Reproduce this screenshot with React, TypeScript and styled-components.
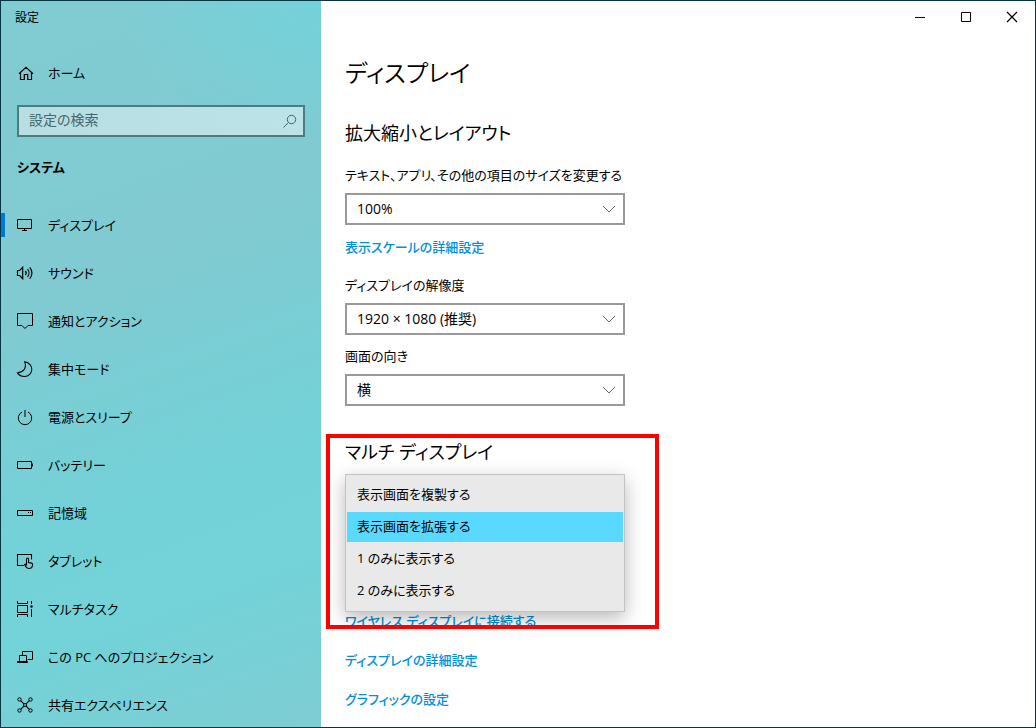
import React, { useState } from "react";
import styled, { createGlobalStyle } from "styled-components";

const GlobalStyle = createGlobalStyle`
  *, *::before, *::after { box-sizing: border-box; }
  body {
    margin: 0;
    font-family: "Open Sans", "Noto Sans CJK JP", sans-serif;
    font-feature-settings: "palt";
    font-size: 13px;
    line-height: 20px;
    color: #000;
  }
  button, input, select {
    font: inherit;
    font-feature-settings: inherit;
    color: inherit;
  }
  h1, h2, p, ul { margin: 0; padding: 0; }
`;

const Window = styled.div`
  display: grid;
  grid-template-columns: 320px minmax(0, 1fr);
  height: 100vh;
  border: 1px solid #06363f;
  background: #fff;
  overflow: hidden;
`;

const Sidebar = styled.aside`
  display: flex;
  flex-direction: column;
  min-height: 0;
  overflow-y: auto;
  scrollbar-width: none;
  background:
    radial-gradient(ellipse 200px 140px at 100% 0%, #73d2da 0%, rgba(115, 210, 218, 0) 100%),
    linear-gradient(160deg, #80ccd3 0%, #81cad1 36%, #72d2d8 66%, #72d3d8 78%, #7ecdd3 100%);
`;

const WindowTitle = styled.p`
  padding: 7px 14px 5px;
  font-size: 12px;
`;

const NavLink = styled.a<{ $active?: boolean }>`
  display: flex;
  flex: none;
  align-items: center;
  gap: 14px;
  height: 48px;
  padding-left: 15px;
  color: inherit;
  text-decoration: none;
  background: linear-gradient(#0078d7, #0078d7) left center / ${(p) => (p.$active ? "4px 24px" : "0 0")} no-repeat;
`;

const HomeArea = styled.div`
  padding-top: 16px;
`;

const SearchBox = styled.form`
  display: flex;
  flex: none;
  align-items: center;
  height: 32px;
  margin: 8px 16px 0;
  padding: 0 5px 0 10px;
  border: 2px solid #4c7b80;
  background: linear-gradient(100deg, #b7dee2, #bce4e8);
  color: #4b666b;
`;

const SearchInput = styled.input`
  flex: 1;
  min-width: 0;
  padding: 0 0 2px;
  border: 0;
  outline: 0;
  background: transparent;
  font-size: 14px;
  &::placeholder { color: #47666b; opacity: 1; }
`;

const SearchButton = styled.button`
  display: flex;
  padding: 0;
  border: 0;
  background: transparent;
`;

const GroupTitle = styled.h2`
  padding: 20px 16px 24px;
  font-size: 13px;
  line-height: 20px;
  font-weight: 600;
`;

const NavList = styled.ul`
  list-style: none;
`;

const Main = styled.main`
  display: flex;
  flex-direction: column;
  min-width: 0;
  overflow: hidden;
`;

const CaptionBar = styled.div`
  display: flex;
  flex: none;
  justify-content: flex-end;
`;

const CaptionButton = styled.button`
  display: grid;
  place-items: center;
  width: 46px;
  height: 32px;
  padding: 0;
  border: 0;
  background: transparent;
`;

const Content = styled.div`
  display: flex;
  flex-direction: column;
  align-items: flex-start;
  padding: 20px 24px 0;
`;

const PageTitle = styled.h1`
  font-size: 24px;
  line-height: 40px;
  font-weight: 350;
`;

const Section = styled.section`
  display: flex;
  flex-direction: column;
  align-items: flex-start;
  width: 100%;
  margin-top: 24px;
`;

const SectionTitle = styled.h2`
  font-size: 18px;
  line-height: 32px;
  font-weight: 400;
`;

const Field = styled.div<{ $gap: number }>`
  display: grid;
  gap: 8px;
  width: 280px;
  max-width: 100%;
  margin-top: ${(p) => p.$gap}px;
`;

const SelectFrame = styled.div`
  display: grid;
  align-items: center;
  & > * { grid-area: 1 / 1; }
  & > svg { justify-self: end; margin-right: 9px; pointer-events: none; }
`;

const Select = styled.select`
  width: 100%;
  height: 32px;
  padding: 0 32px 0 10px;
  border: 2px solid #999;
  border-radius: 0;
  background: #fff;
  font-size: 14px;
  appearance: none;
`;

const TextLink = styled.a<{ $gap: number }>`
  margin-top: ${(p) => p.$gap}px;
  color: #008fdf;
  font-weight: 500;
  text-decoration: none;
`;

const MultiSection = styled(Section)`
  position: relative;
  margin-top: 30px;
`;

const Popup = styled.div`
  position: absolute;
  top: 38px;
  left: 0;
  z-index: 1;
  width: 280px;
  padding: 4px 1px;
  border: 1px solid #c3c3c3;
  background: #e9e9e9;
  box-shadow: 0 6px 18px rgba(0, 0, 0, 0.28);
`;

const Option = styled.button<{ $selected: boolean }>`
  display: block;
  width: 100%;
  height: 32px;
  padding: 0 10px 2px;
  border: solid transparent;
  border-width: 1px 0;
  text-align: left;
  background: ${(p) => (p.$selected ? "#5ad9ff" : "transparent")};
  background-clip: padding-box;
`;

const Highlight = styled.div`
  position: absolute;
  top: -2px;
  left: -19px;
  z-index: 2;
  width: 333px;
  height: 195px;
  border: 4px solid #ff0000;
  pointer-events: none;
`;

const MultiLinks = styled.div`
  display: flex;
  flex-direction: column;
  align-items: flex-start;
  padding-top: 124px;
`;

const Glyph = ({ children, size = 18, weight = 1 }: { children: React.ReactNode; size?: number; weight?: number }) => (
  <svg width={size} height={size} viewBox={`0 0 ${size} ${size}`} fill="none" stroke="currentColor" strokeWidth={weight} aria-hidden="true">
    {children}
  </svg>
);

const homeIcon = <path d="M3 9.7 10 3.3l7 6.4M4.5 8.5v7h3.800v-5h3.400v5h3.800v-7" strokeWidth="1.2" />;

const navItems = [
  { label: "ディスプレイ", icon: <path d="M1.5 3.5h14v9h-14zM8.5 12.5v2M6 14.5h5" /> },
  {
    label: "サウンド",
    icon: (
      <path
        d="M1.5 6.5h2.200l3-3.200v11.400l-3-3.200H1.500zM9.300 7c1.100 1.200 1.100 2.900 0 4.100M11.500 5.200c2 2.200 2 5.500 0 7.700M13.700 3.400c3 3.300 3 8 0 11.300"
        strokeWidth="1.200"
      />
    ),
  },
  { label: "通知とアクション", icon: <path d="M1.5 1.5h15v12h-4.500l-3 3-3-3H1.500z" /> },
  {
    label: "集中モード",
    icon: <path d="M8.700 1.900c4.200.4 7.100 3.700 7.100 7.300 0 4.100-3.200 7.300-7.200 7.300-3 0-5.600-1.300-7.100-3.600 5.800-.4 9.600-4.900 7.200-11z" strokeWidth="1.100" />,
  },
  { label: "電源とスリープ", icon: <path d="M6 4a6.700 6.700 0 1 0 6 0M9 2v7" /> },
  { label: "バッテリー", icon: <path d="M1.5 5.5h14v7h-14zM16.500 7.500v3" /> },
  { label: "記憶域", icon: <path d="M2 6.500h14.500v5H1.500v-5zM12 8.500h1M14 8.500h1" /> },
  {
    label: "タブレット",
    icon: <path d="M8 13.500H1.500v-11h14v5M10.500 13.500V7a1 1 0 0 1 2 0v3.500l3 .6c.8.2 1.200.6 1.100 1.400-.1 2.400-1 4-3.600 4-2.200 0-3-1-4.500-4 .6-.8 1.400-.3 2 .5" strokeWidth="1.100" />,
  },
  {
    label: "マルチタスク",
    icon: (
      <>
        <path d="M1.500 1v2.500h10V1M1.500 5.500h10v7h-10zM1.500 17v-2.500h10V17M15.500 1v3M15.500 9v8" />
        <circle cx="15.500" cy="6.500" r="1.200" fill="currentColor" stroke="none" />
      </>
    ),
  },
  { label: "この PC へのプロジェクション", icon: <path d="M6.500 7V3.500h10v8h-5M3.500 13.500v-6h7v6M1.500 13.500v1h10v-1z" /> },
  {
    label: "共有エクスペリエンス",
    icon: (
      <>
        <circle cx="3.500" cy="3.500" r="1.700" />
        <circle cx="14.500" cy="3.500" r="1.700" />
        <circle cx="3.500" cy="14.500" r="1.700" />
        <circle cx="14.500" cy="14.500" r="1.700" />
        <circle cx="9" cy="9" r="1.500" />
        <path d="m4.700 4.700 3.200 3.200M13.300 4.700 10.100 7.900M4.700 13.300l3.200-3.200M13.300 13.300l-3.200-3.200" strokeWidth="1.200" />
      </>
    ),
  },
];

const choices = ["表示画面を複製する", "表示画面を拡張する", "1 のみに表示する", "2 のみに表示する"];

function SelectField({ id, label, value, gap }: { id: string; label: string; value: string; gap: number }) {
  return (
    <Field $gap={gap}>
      <label htmlFor={id}>{label}</label>
      <SelectFrame>
        <Select id={id}>
          <option>{value}</option>
        </Select>
        <svg width="14" height="8" viewBox="0 0 14 8" fill="none" stroke="#666" aria-hidden="true">
          <path d="m1 1 6 6 6-6" />
        </svg>
      </SelectFrame>
    </Field>
  );
}

export default function App() {
  const [selected, setSelected] = useState(1);

  return (
    <>
      <GlobalStyle />
      <Window>
        <Sidebar>
          <WindowTitle>設定</WindowTitle>
          <HomeArea>
            <NavLink href="#home">
              <Glyph>{homeIcon}</Glyph>
              ホーム
            </NavLink>
          </HomeArea>
          <SearchBox role="search">
            <SearchInput type="text" aria-label="設定の検索" placeholder="設定の検索" />
            <SearchButton type="button" aria-label="検索">
              <Glyph size={16}>
                <circle cx="9.500" cy="6.500" r="4.200" />
                <path d="M6.500 9.500 1.500 14.500" />
              </Glyph>
            </SearchButton>
          </SearchBox>
          <GroupTitle>システム</GroupTitle>
          <nav>
            <NavList>
              {navItems.map((item, i) => (
                <li key={item.label}>
                  <NavLink href="#" $active={i === 0}>
                    <Glyph>{item.icon}</Glyph>
                    {item.label}
                  </NavLink>
                </li>
              ))}
            </NavList>
          </nav>
        </Sidebar>

        <Main>
          <CaptionBar>
            <CaptionButton aria-label="最小化">
              <Glyph size={12}><path d="M1 6.500h10" /></Glyph>
            </CaptionButton>
            <CaptionButton aria-label="最大化">
              <Glyph size={12}><path d="M1.500 1.500h9v9h-9z" /></Glyph>
            </CaptionButton>
            <CaptionButton aria-label="閉じる">
              <Glyph size={12}><path d="m1 1 10 10M11 1 1 11" strokeWidth="1.200" /></Glyph>
            </CaptionButton>
          </CaptionBar>
          <Content>
            <PageTitle>ディスプレイ</PageTitle>
            <Section>
              <SectionTitle>拡大縮小とレイアウト</SectionTitle>
              <SelectField id="scale" label="テキスト、アプリ、その他の項目のサイズを変更する" value="100%" gap={16} />
              <TextLink href="#scale-settings" $gap={12}>表示スケールの詳細設定</TextLink>
              <SelectField id="resolution" label="ディスプレイの解像度" value="1920 × 1080 (推奨)" gap={18} />
              <SelectField id="orientation" label="画面の向き" value="横" gap={11} />
            </Section>
            <MultiSection>
              <SectionTitle id="multi-title">マルチ ディスプレイ</SectionTitle>
              <Popup role="listbox" aria-labelledby="multi-title">
                {choices.map((choice, i) => (
                  <Option
                    key={choice}
                    type="button"
                    role="option"
                    aria-selected={selected === i}
                    $selected={selected === i}
                    onClick={() => setSelected(i)}
                  >
                    {choice}
                  </Option>
                ))}
              </Popup>
              <Highlight />
              <MultiLinks>
                <TextLink href="#wireless" $gap={19}>ワイヤレス ディスプレイに接続する</TextLink>
                <TextLink href="#advanced" $gap={19}>ディスプレイの詳細設定</TextLink>
                <TextLink href="#graphics" $gap={19}>グラフィックの設定</TextLink>
              </MultiLinks>
            </MultiSection>
          </Content>
        </Main>
      </Window>
    </>
  );
}
